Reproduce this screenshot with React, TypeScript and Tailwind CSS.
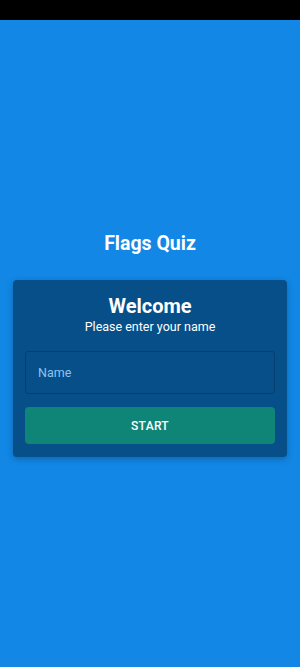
export default function App() {
  return (
    <div className="flex min-h-[667px] w-full flex-col bg-[#1287e5] font-['Roboto',sans-serif]">
      <div className="h-5 w-full bg-black" />
      <div className="flex flex-1 flex-col items-center justify-center px-[13px] pt-[2px]">
        <h1 className="text-[19.5px] font-bold leading-[24px] text-white">Flags Quiz</h1>
        <div className="mt-6 w-full rounded-[4px] bg-[#064f89] px-3 pt-[14px] pb-[13px] shadow-[0_2px_6px_rgba(0,0,0,0.25)]">
          <h2 className="text-center text-[20px] font-bold leading-[24px] text-white">Welcome</h2>
          <p className="text-center text-[12.5px] leading-[18px] text-white">Please enter your name</p>
          <input
            type="text"
            placeholder="Name"
            className="mt-[15px] h-[43px] w-full rounded-[3px] border border-[#043f6f] bg-transparent px-3 text-[12.5px] text-white outline-none placeholder:text-[#8fc3ee]"
          />
          <button className="mt-[13px] h-[37px] w-full rounded-[4px] bg-[#0f8577] text-[12px] font-medium tracking-[0.3px] text-white">
            START
          </button>
        </div>
      </div>
    </div>
  );
}
